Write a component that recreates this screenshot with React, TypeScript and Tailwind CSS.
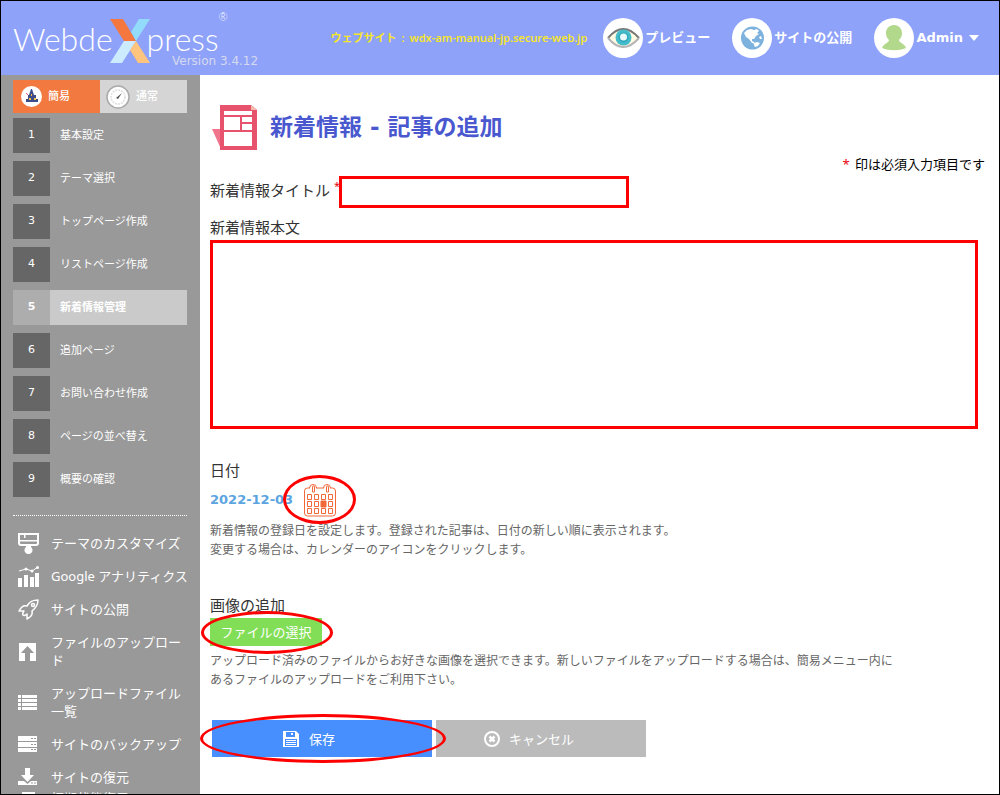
import React, { useState } from 'react';

interface IStep {
  id: number;
  label: string;
}

interface IMenuItem {
  label: string;
  icon: React.ReactNode;
}

const STEPS: IStep[] = [
  { id: 1, label: '基本設定' },
  { id: 2, label: 'テーマ選択' },
  { id: 3, label: 'トップページ作成' },
  { id: 4, label: 'リストページ作成' },
  { id: 5, label: '新着情報管理' },
  { id: 6, label: '追加ページ' },
  { id: 7, label: 'お問い合わせ作成' },
  { id: 8, label: 'ページの並べ替え' },
  { id: 9, label: '概要の確認' },
];

const MENU: IMenuItem[] = [
  {
    label: 'テーマのカスタマイズ',
    icon: (
      <>
        <path d="M1 1h19v9a2 2 0 0 1-2 2H3a2 2 0 0 1-2-2z" fill="none" stroke="#fff" strokeWidth="2" />
        <path d="M1 7h19v1.500H1zM6 2h1.500v3H6zM8 12h5v2a4 4 0 1 1-5 0z" />
      </>
    ),
  },
  {
    label: 'Google アナリティクス',
    icon: (
      <>
        <path d="M0 12h4v9H0zM6 9h4v12H6zM12 11h4v10h-4zM17 7h4v14h-4z" />
        <path d="M1 5l7-2 6 2 6-4" fill="none" stroke="#fff" />
        <circle cx="8" cy="3" r="1.500" />
        <circle cx="14" cy="5" r="1.500" />
        <circle cx="19.500" cy="1.500" r="1.500" />
      </>
    ),
  },
  {
    label: 'サイトの公開',
    icon: (
      <g fill="none" stroke="#fff" strokeWidth="1.500" strokeLinejoin="round">
        <path d="M20 1c-5 0-8 1-11 6-3-1-6 1-8 5l5 0c-1 2-2 3-1 4s3 0 4-1l0 5c4-2 6-4 5-8 5-4 6-7 6-11z" />
        <circle cx="15" cy="6" r="1.500" />
      </g>
    ),
  },
  {
    label: 'ファイルのアップロード',
    icon: <path d="M1 2h17v18h-6v-8h4L9.500 5 3 12h4v8H1z" />,
  },
  {
    label: 'アップロードファイル一覧',
    icon: <path d="M0 3h3v3H0zM4 3h15v3H4zM0 7h3v3H0zM4 7h15v3H4zM0 11h3v3H0zM4 11h15v3H4zM0 15h3v3H0zM4 15h15v3H4z" />,
  },
  {
    label: 'サイトのバックアップ',
    icon: <path fillRule="evenodd" d="M0 2h19v5H0zM13 4v1h2V4zM16 4v1h2V4zM0 8h19v5H0zM13 10v1h2v-1zM16 10v1h2v-1zM0 14h19v4H0zM13 15v1h2v-1zM16 15v1h2v-1z" />,
  },
  {
    label: 'サイトの復元',
    icon: <path fillRule="evenodd" d="M7 1h5v7h4l-6.500 7L3 8h4zM0 14h6l3.500 3 3.500-3h6v4H0zM13 15.500v1h2v-1zM16 15.500v1h2v-1z" />,
  },
];

const EyeIcon = () => (
  <svg viewBox="0 0 40 40" className="size-10">
    <circle cx="20" cy="20" r="20" fill="#fff" />
    <path d="M5 20Q20 2 36 20Q20 38 5 20z" fill="#fffbe3" />
    <path d="M5 20Q20 2 36 20" fill="none" stroke="#777" strokeWidth="2" />
    <path d="M5 20Q20 38 36 20" fill="none" stroke="#b5b5b5" strokeWidth="2" />
    <circle cx="20.500" cy="19.500" r="8" fill="#46bccb" />
    <circle cx="20.500" cy="19.500" r="5" fill="#2fa9bd" />
    <circle cx="20.500" cy="19" r="3.500" fill="#e8fafa" />
  </svg>
);

const GlobeIcon = () => (
  <svg viewBox="0 0 40 40" className="size-10">
    <circle cx="20" cy="20" r="20" fill="#fff" />
    <circle cx="20.500" cy="20" r="11.500" fill="#7db1de" />
    <path d="M12 15l3-3 4-1 3 1 3-1 2 2-2 2 2 1-3 2-2 3-2 0 0 2 2 1 1 2-3-1-3-4-3-2zM22 25l3-1 3 1-2 3-3 1-1-2zM27 19l2-1 1 3-2 0z" fill="#fff" />
  </svg>
);

const UserIcon = () => (
  <svg viewBox="0 0 40 40" className="size-10">
    <circle cx="20" cy="20" r="20" fill="#fff" />
    <path d="M20 7c5 0 8 4 8 8 0 3-1 5-3 7 0 3 5 3 7 8-7 3-17 3-24 0 2-5 7-5 7-8-2-2-3-4-3-7 0-4 3-8 8-8z" fill="#b1d88b" />
  </svg>
);

const NewsIcon = () => (
  <svg viewBox="0 0 46 46" className="h-[46px] w-[46px]">
    <path d="M0 25h9v20z" fill="#f0748c" />
    <path d="M8 1h31l6 5v40H8z" fill="#e7536d" />
    <path d="M39 1l6 5h-6z" fill="#f5bba8" />
    <path d="M12 7h28v4H12zM12 13h16v13H12zM30 13h10v5H30zM30 20h10v6H30zM12 28h28v14H12z" fill="#fff" />
  </svg>
);

const CalendarIcon = () => (
  <svg viewBox="0 0 32 34" className="h-[34px] w-8" fill="none" stroke="#f1683b">
    <path d="M6 5H3.500a3 3 0 0 0-3 3v22a3 3 0 0 0 3 3h25a3 3 0 0 0 3-3V8a3 3 0 0 0-3-3H26M12 5h8" />
    <path d="M5.500 5a3.500 3.500 0 0 1 7 0M19.500 5a3.500 3.500 0 0 1 7 0M8.500 9V4a1 1 0 0 1 2 0v5zM22.500 9V4a1 1 0 0 1 2 0v5z" />
    <path d="M3.500 11.500h4v5h-4zM10.500 11.500h4v5h-4zM17.500 11.500h4v5h-4zM24.500 11.500h4v5h-4zM3.500 18.500h4v5h-4zM10.500 18.500h4v5h-4zM24.500 18.500h4v5h-4zM3.500 25.500h4v5h-4zM10.500 25.500h4v5h-4zM17.500 25.500h4v5h-4zM24.500 25.500h4v5h-4z" />
    <path d="M17 18h5v6h-5z" fill="#f1683b" />
  </svg>
);

const Logo = () => (
  <div className="flex h-full flex-col pl-3">
    <div className="flex h-[52px] items-start pt-6 font-[Lato,sans-serif] text-[32px] leading-7 font-light text-white">
      <span>Webde</span>
      <svg viewBox="0 0 40 44" className="-mx-[3px] -mt-[6px] h-11 w-10 shrink-0">
        <path d="M0 0h13l13 22H14z" fill="#f4773f" />
        <path d="M29 0h11L26 22 21 13z" fill="#93dbfa" />
        <path d="M14 22h12L12 44H0z" fill="#cdebff" />
        <path d="M26 22l14 22H28L20 31z" fill="#ffc47d" />
      </svg>
      <span>press</span>
      <span className="-mt-4 text-[11px] leading-4">®</span>
    </div>
    <p className="pl-[159px] font-['DejaVu_Sans',sans-serif] text-[12px] leading-4 text-[#d5d9ee]">Version 3.4.12</p>
  </div>
);

const Header = () => (
  <header className="flex h-[74px] shrink-0 justify-between bg-[#8ea2f9] pr-5">
    <Logo />
    <nav className="flex items-center text-[13px] font-bold text-white">
      <a href="#site" className="mr-4 flex gap-[5px] text-[11px] font-semibold text-[#f5e52c]">
        <span>ウェブサイト</span>
        <span>:</span>
        <span>wdx-am-manual-jp.secure-web.jp</span>
      </a>
      <a href="#preview" className="mr-[22px] flex items-center gap-[2px]">
        <EyeIcon />
        プレビュー
      </a>
      <a href="#publish" className="mr-[22px] flex items-center gap-[2px]">
        <GlobeIcon />
        サイトの公開
      </a>
      <button type="button" className="flex items-center gap-[2px] font-['DejaVu_Sans',sans-serif]">
        <UserIcon />
        Admin
        <svg viewBox="0 0 10 6" className="ml-1 h-[6px] w-[10px]" fill="#fff">
          <path d="M0 0h10L5 6z" />
        </svg>
      </button>
    </nav>
  </header>
);

const Sidebar = () => {
  const [current, setCurrent] = useState(5);

  return (
    <aside className="w-[199px] shrink-0 overflow-hidden bg-[#999] pt-[5px] pr-[13px] pl-3 text-white">
      <div className="grid h-[33px] grid-cols-2 text-[11px] font-medium">
        <button type="button" className="flex items-center gap-[6px] bg-[#f27a40] pl-2">
          <svg viewBox="0 0 21 21" className="size-[21px]">
            <circle cx="10.500" cy="10.500" r="10.500" fill="#fff" />
            <path d="M10 3h1l2 6h2v4h2v3H5v-3h2V9h1z" fill="#3f4c8c" />
            <path d="M10 8h1v2h-1zM8 12h2v2H8zM13 12h2v2h-2z" fill="#f5c63c" />
            <path d="M5 7l2 2" stroke="#e58" />
          </svg>
          簡易
        </button>
        <button type="button" className="flex items-center gap-[6px] bg-[#d5d5d5] pl-[6px]">
          <svg viewBox="0 0 24 24" className="size-6">
            <circle cx="12" cy="12" r="11" fill="#fff" stroke="#aaa" strokeWidth="1.500" />
            <circle cx="12" cy="12" r="7" fill="none" stroke="#ddd" strokeWidth="1.500" strokeDasharray="2 1" />
            <path d="M10 13l6-5-4 6z" fill="#555" />
          </svg>
          通常
        </button>
      </div>

      <ol className="mt-[5px] flex flex-col gap-2 border-b border-dotted border-white pb-[18px] text-[11px]">
        {STEPS.map((step) => (
          <li key={step.id}>
            <button
              type="button"
              onClick={() => setCurrent(step.id)}
              className={`flex h-[35px] w-full items-center text-left ${step.id === current ? 'bg-[#cacaca] font-bold' : ''}`}
            >
              <span
                className={`flex h-full w-[37px] items-center justify-center font-['DejaVu_Sans',sans-serif] ${step.id === current ? 'bg-[#adadad]' : 'bg-[#666]'}`}
              >
                {step.id}
              </span>
              <span className="pl-[10px]">{step.label}</span>
            </button>
          </li>
        ))}
      </ol>

      <ul className="mt-[18px] flex flex-col gap-[15px] text-[13px] leading-[18px]">
        {MENU.map((item) => (
          <li key={item.label}>
            <a href="#menu" className="flex items-center">
              <svg viewBox="0 0 21 21" className="-my-1 mr-3 ml-[5px] size-[21px] shrink-0" fill="#fff">
                {item.icon}
              </svg>
              <span className="-mr-1">{item.label}</span>
            </a>
          </li>
        ))}
        {/* Continua abaixo da dobra */}
        <li className="-mt-3">
          <a href="#reset" className="flex items-center">
            <svg viewBox="0 0 21 21" className="-my-1 mr-3 ml-[5px] size-[21px] shrink-0" fill="none" stroke="#fff" strokeWidth="2">
              <path d="M5 5h11v14H5z" />
            </svg>
            <span>初期状態復元</span>
          </a>
        </li>
      </ul>
    </aside>
  );
};

const App: React.FC = () => {
  const [title, setTitle] = useState('');
  const [body, setBody] = useState('');

  return (
    <div className="flex h-screen flex-col overflow-hidden border border-black bg-white font-['Noto_Sans','Noto_Sans_CJK_JP',sans-serif]">
      <Header />
      <div className="flex min-h-0 flex-1">
        <Sidebar />
        <main className="min-w-0 flex-1 pt-[29px] pr-[14px] pl-[10px] text-[15px] leading-5 text-[#333]">
          <div className="flex items-center gap-3 pl-[2px]">
            <NewsIcon />
            <h1 className="font-['DejaVu_Sans','Noto_Sans_CJK_JP',sans-serif] text-[23px] leading-8 font-bold text-[#4958cf]">
              新着情報 - 記事の追加
            </h1>
          </div>
          <p className="mt-1 text-right text-[13px] text-black">
            <span className="mr-[2px] text-red-600">*</span> 印は必須入力項目です
          </p>

          <form onSubmit={(e) => e.preventDefault()}>
            <div className="mt-[2px] flex items-center">
              <label htmlFor="title" className="flex w-[129px] gap-1 pb-1 whitespace-nowrap">
                新着情報タイトル
                <span className="text-[11px] leading-3 text-red-600">*</span>
              </label>
              <input
                id="title"
                value={title}
                onChange={(e) => setTitle(e.target.value)}
                className="h-8 w-[290px] border-3 border-[#f00] px-2 outline-none"
              />
            </div>

            <div className="mt-[9px] pr-[7px]">
              <label htmlFor="body" className="block">新着情報本文</label>
              <textarea
                id="body"
                value={body}
                onChange={(e) => setBody(e.target.value)}
                className="mt-[3px] block h-[189px] w-full resize-none border-3 border-[#f00] p-2 outline-none"
              />
            </div>

            <section className="mt-[31px]">
              <h2>日付</h2>
              <div className="mt-[3px] flex h-[34px] items-center">
                <span className="font-['DejaVu_Sans',sans-serif] text-[13px] font-bold text-[#5ba4e0]">2022-12-03</span>
                <button type="button" aria-label="カレンダー" className="relative ml-[11px]">
                  <CalendarIcon />
                  <span className="absolute -top-2 -left-[21px] h-[49px] w-[73px] rounded-[50%] border-3 border-[#f00]" />
                </button>
              </div>
              <p className="mt-1 text-[12px] leading-[19px] text-[#666]">
                新着情報の登録日を設定します。登録された記事は、日付の新しい順に表示されます。
                <br />
                変更する場合は、カレンダーのアイコンをクリックします。
              </p>
            </section>

            <section className="mt-9">
              <h2>画像の追加</h2>
              <button type="button" className="relative mt-[3px] block h-7 w-28 bg-[#82de57] text-[13px] text-white">
                ファイルの選択
                <span className="absolute -top-[7px] -left-[9px] h-[43px] w-[132px] rounded-[50%] border-3 border-[#f00]" />
              </button>
              <p className="mt-[5px] max-w-[690px] text-[12px] leading-[19px] text-[#666]">
                アップロード済みのファイルからお好きな画像を選択できます。新しいファイルをアップロードする場合は、簡易メニュー内にあるファイルのアップロードをご利用下さい。
              </p>
            </section>

            <div className="mt-[31px] flex gap-1 pl-[2px] text-[13px] text-white">
              <button type="submit" className="relative flex h-[37px] w-[220px] items-center gap-[10px] bg-[#478fff] pl-[71px]">
                <svg viewBox="0 0 16 16" className="size-4" fill="#fff">
                  <path fillRule="evenodd" d="M0 0h13l3 3v13H0zM3 1v5h9V1zM8 2h2v2H8zM2 8v7h12V8zM3 9h10v1H3zM3 11h10v1H3zM3 13h10v1H3z" />
                </svg>
                保存
                <span className="absolute -top-[6px] -left-3 h-[49px] w-[246px] rounded-[50%] border-3 border-[#f00]" />
              </button>
              <button type="button" className="flex h-[37px] w-[210px] items-center gap-[9px] bg-[#bbb] pl-12">
                <svg viewBox="0 0 16 16" className="size-4">
                  <circle cx="8" cy="8" r="7" fill="none" stroke="#fff" strokeWidth="2" />
                  <path d="M5.500 5.500l5 5M10.500 5.500l-5 5" stroke="#fff" strokeWidth="2.500" />
                </svg>
                キャンセル
              </button>
            </div>
          </form>
        </main>
      </div>
    </div>
  );
};

export default App;
